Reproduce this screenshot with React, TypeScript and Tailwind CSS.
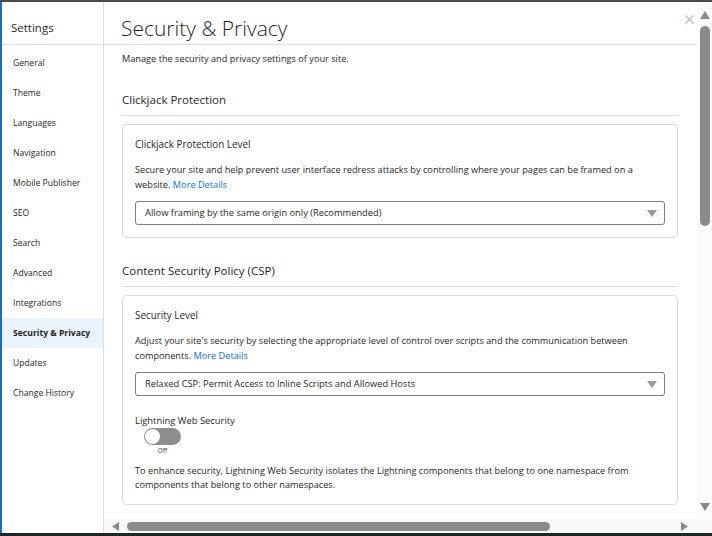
import React from 'react';

const navItems = [
  'General',
  'Theme',
  'Languages',
  'Navigation',
  'Mobile Publisher',
  'SEO',
  'Search',
  'Advanced',
  'Integrations',
  'Security & Privacy',
  'Updates',
  'Change History',
];

const Caret: React.FC = () => (
  <svg width="10" height="7" viewBox="0 0 10 7" className="shrink-0">
    <path d="M0 0 L10 0 L5 7 Z" fill="#9b9b9b" />
  </svg>
);

const SelectBox: React.FC<{ value: string }> = ({ value }) => (
  <div className="mt-[9px] h-[24px] border border-[#7f7f7f] rounded-[3px] flex items-center justify-between pl-[9px] pr-[7px] text-[9.3px] text-[#1f1f1f]">
    <span>{value}</span>
    <Caret />
  </div>
);

const App: React.FC = () => {
  return (
    <div className="w-[712px] h-[536px] bg-[#1d2727] flex flex-col overflow-hidden font-['Open_Sans',sans-serif] text-[#1f1f1f]">
      <div className="h-[2px] bg-[#4a4a4a] shrink-0" />
      <div className="flex-1 flex min-h-0">
        <div className="w-[2px] bg-[#0b6fd3] shrink-0" />
        <div className="flex-1 flex bg-white min-w-0">
          {/* sidebar */}
          <aside className="w-[102px] shrink-0 border-r border-[#d8dde6] flex flex-col">
            <div className="h-[43px] border-b border-[#d8dde6] flex items-center pt-[10px] pl-[9px] text-[11.5px]">
              Settings
            </div>
            <nav className="pt-[3px]">
              {navItems.map((item) => (
                <div
                  key={item}
                  className={
                    item === 'Security & Privacy'
                      ? 'h-[30px] flex items-center pl-[11px] text-[8.6px] font-bold bg-[#e9f3fc]'
                      : 'h-[30px] flex items-center pl-[11px] text-[8.6px]'
                  }
                >
                  {item}
                </div>
              ))}
            </nav>
          </aside>

          {/* main column */}
          <div className="flex-1 flex flex-col min-w-0">
            <div className="flex-1 flex min-h-0">
              <main className="flex-1 flex flex-col min-w-0">
                <header className="relative h-[43px] shrink-0 border-b border-[#d8dde6] flex items-center pt-[10px] pl-[17px]">
                  <h1 className="text-[21px] font-light text-[#1f1f1f] leading-none">Security &amp; Privacy</h1>
                  <svg width="9" height="9" viewBox="0 0 9 9" className="absolute right-[3px] top-[13px]">
                    <path d="M0.5 0.5 L8.5 8.5 M8.5 0.5 L0.5 8.5" stroke="#a9bad6" strokeWidth="1.1" fill="none" />
                  </svg>
                </header>

                <div className="pl-[18px] pr-[19px] pt-[7px]">
                  <p className="text-[9.2px] leading-[14px]">Manage the security and privacy settings of your site.</p>

                  <h2 className="mt-[25px] text-[11.5px] leading-[18px] pb-[6px] border-b border-[#dcdde8]">Clickjack Protection</h2>

                  <section className="mt-[8px] border border-[#dddbda] rounded-[4px] px-[12px] pt-[12px] pb-[12px]">
                    <h3 className="text-[9.9px] leading-[14px]">Clickjack Protection Level</h3>
                    <p className="mt-[11px] text-[9.2px] leading-[15px]">
                      Secure your site and help prevent user interface redress attacks by controlling where your pages can be framed on a
                      <br />
                      website. <span className="text-[#0b70d4]">More Details</span>
                    </p>
                    <SelectBox value="Allow framing by the same origin only (Recommended)" />
                  </section>

                  <h2 className="mt-[24px] text-[11.5px] leading-[18px] pb-[6px] border-b border-[#dcdde8]">Content Security Policy (CSP)</h2>

                  <section className="mt-[8px] border border-[#dddbda] rounded-[4px] px-[12px] pt-[12px] pb-[12px]">
                    <h3 className="text-[9.9px] leading-[14px]">Security Level</h3>
                    <p className="mt-[11px] text-[9.2px] leading-[15px]">
                      Adjust your site's security by selecting the appropriate level of control over scripts and the communication between
                      <br />
                      components. <span className="text-[#0b70d4]">More Details</span>
                    </p>
                    <SelectBox value="Relaxed CSP: Permit Access to Inline Scripts and Allowed Hosts" />

                    <div className="mt-[18px] text-[9.4px] leading-[14px]">Lightning Web Security</div>
                    <div className="flex flex-col items-center w-[37px] ml-[9px]">
                      <div className="w-[37px] h-[17px] rounded-full bg-[#8e8e8e] flex items-center pl-[1px]">
                        <div className="w-[15px] h-[15px] rounded-full bg-white" />
                      </div>
                      <span className="text-[6.5px] leading-[10px] mt-[1px] text-[#3a3a3a]">Off</span>
                    </div>
                    <p className="mt-[8px] text-[9.2px] leading-[14px]">
                      To enhance security, Lightning Web Security isolates the Lightning components that belong to one namespace from
                      <br />
                      components that belong to other namespaces.
                    </p>
                  </section>
                </div>
              </main>

              {/* vertical scrollbar */}
              <div className="w-[15px] shrink-0 bg-[#fbfbfb] flex flex-col items-center pt-[9px] pb-[8px]">
                <svg width="10" height="8" viewBox="0 0 10 8">
                  <path d="M5 0 L10 8 L0 8 Z" fill="#8a8a8a" />
                </svg>
                <div className="mt-[7px] w-[10px] h-[200px] rounded-full bg-[#8a8a8a]" />
                <div className="flex-1" />
                <svg width="10" height="8" viewBox="0 0 10 8">
                  <path d="M0 0 L10 0 L5 8 Z" fill="#8a8a8a" />
                </svg>
              </div>
            </div>

            {/* horizontal scrollbar */}
            <div className="h-[14px] shrink-0 bg-[#f8f8f8] flex items-center">
              <div className="flex-1 flex items-center pl-[8px] pr-[9px]">
                <svg width="7" height="9" viewBox="0 0 7 9">
                  <path d="M7 0 L7 9 L0 4.5 Z" fill="#8a8a8a" />
                </svg>
                <div className="ml-[8px] w-[423px] h-[9px] rounded-full bg-[#8a8a8a]" />
                <div className="flex-1" />
                <svg width="7" height="9" viewBox="0 0 7 9">
                  <path d="M0 0 L7 4.5 L0 9 Z" fill="#8a8a8a" />
                </svg>
              </div>
              <div className="w-[15px]" />
            </div>
          </div>
        </div>
      </div>
      <div className="h-[3px] bg-[#1d2727] shrink-0" />
    </div>
  );
};

export default App;
